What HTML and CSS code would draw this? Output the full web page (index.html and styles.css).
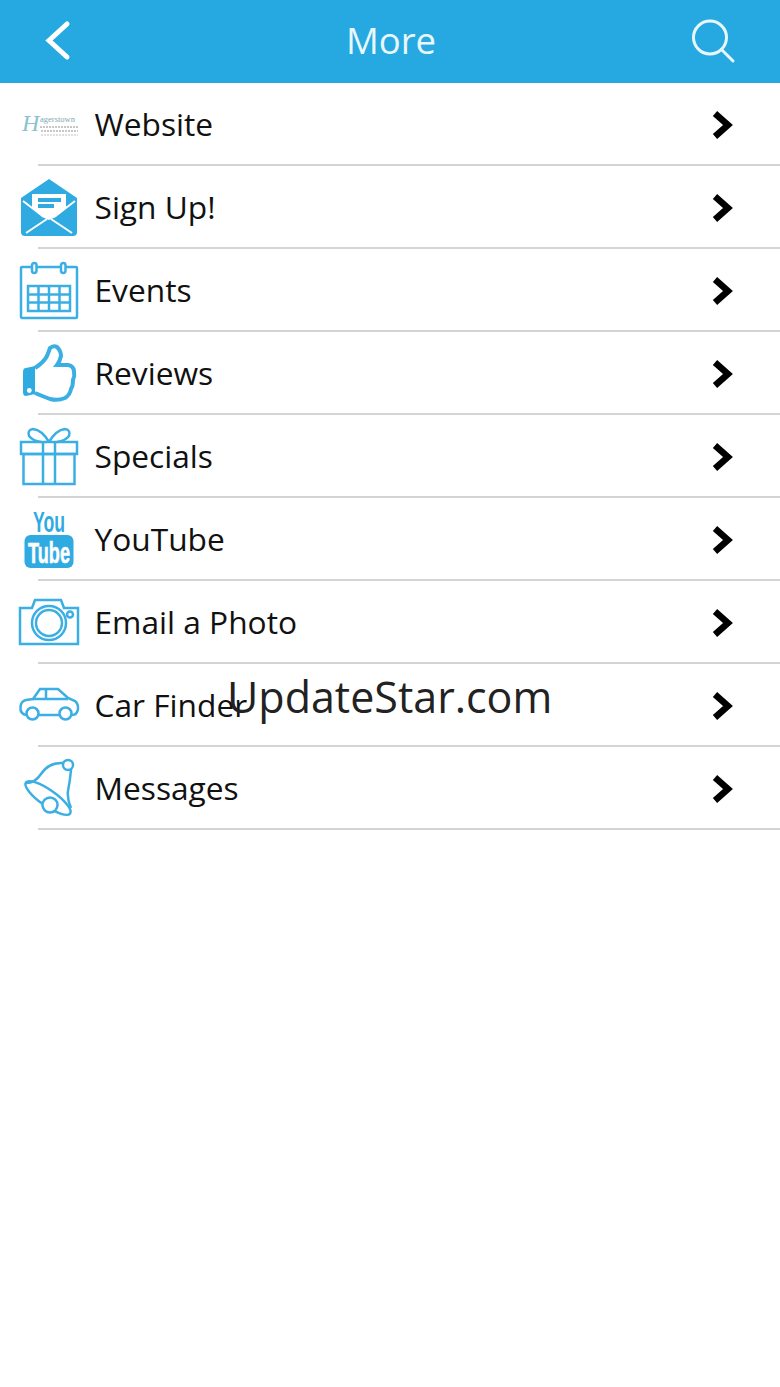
FILE: index.html
```html
<!DOCTYPE html>
<html lang="en">
<head>
  <meta charset="UTF-8">
  <meta name="viewport" content="width=device-width, initial-scale=1">
  <title>More</title>
  <link rel="stylesheet" href="styles.css">
</head>
<body>
<header class="topbar">
  <svg class="back-icon" width="30" height="44" viewBox="0 0 30 44"><polyline points="23,4 5,20.500 23,37"/></svg>
  <h1>More</h1>
  <svg class="search-icon" width="50" height="50" viewBox="0 0 50 50"><circle cx="22" cy="20.500" r="16.500"/><line x1="33.500" y1="32.500" x2="45" y2="44"/></svg>
</header>

<ul class="menu">
  <li class="menu-row">
    <svg class="icon" viewBox="-2 0 62 63">
      <text class="logo-h" x="2" y="38">H</text>
      <text class="logo-name" x="20" y="29">agerstown</text>
      <line class="logo-line" x1="20" y1="34" x2="58" y2="34"/>
      <line class="logo-line" x1="21" y1="38" x2="58" y2="38"/>
      <line class="logo-line faint" x1="21" y1="42" x2="58" y2="42"/>
    </svg>
    <span class="label">Website</span>
    <svg class="chevron" width="22" height="30" viewBox="0 0 22 30"><polyline points="3,3.500 16,15 3,26.500"/></svg>
  </li>
  <li class="menu-row">
    <svg class="icon" viewBox="-2 0 62 63">
      <path class="fill" d="M29 3 L57 22 V56 Q57 60 53 60 H5 Q1 60 1 56 V22 Z"/>
      <path class="paper" d="M12 18 H46 V32 L36 41 L29 44 L22 41 L12 32 Z"/>
      <rect class="fill" x="18" y="22" width="23" height="4"/>
      <rect class="fill" x="18" y="28" width="16" height="4"/>
      <path class="cut" d="M3 25 L20 38 M55 25 L38 38 M6 57 L27 43 M52 57 L31 43"/>
    </svg>
    <span class="label">Sign Up!</span>
    <svg class="chevron" width="22" height="30" viewBox="0 0 22 30"><polyline points="3,3.500 16,15 3,26.500"/></svg>
  </li>
  <li class="menu-row">
    <svg class="icon" viewBox="-2 0 62 63">
      <rect class="line" x="1" y="8" width="56" height="51" rx="1"/>
      <rect class="line ring" x="12" y="4" width="4.500" height="10" rx="2.200"/>
      <rect class="line ring" x="41" y="4" width="4.500" height="10" rx="2.200"/>
      <rect class="line" x="8" y="27" width="42" height="25"/>
      <path class="line" d="M18.500 27 V52 M29 27 V52 M39.500 27 V52 M8 35.500 H50 M8 43.500 H50"/>
    </svg>
    <span class="label">Events</span>
    <svg class="chevron" width="22" height="30" viewBox="0 0 22 30"><polyline points="3,3.500 16,15 3,26.500"/></svg>
  </li>
  <li class="menu-row">
    <svg class="icon" viewBox="-2 0 62 63">
      <path class="line thick" d="M15 26 Q24 20 27 14 Q29 9 30 6 Q34 3 37 5 Q41 9 41 14 Q40 19 37 23 H48 Q54 24 54 30 Q55 34 53 38 Q53 44 51 47 Q50 53 45 56 Q38 59 30 57 Q22 54 15 51"/>
      <path class="fill" d="M15 24 V52 L6 54 Q3 54 3 50 V30 Q3 26 6 26 Z"/>
      <circle class="paper" cx="9.300" cy="48.500" r="2.400"/>
    </svg>
    <span class="label">Reviews</span>
    <svg class="chevron" width="22" height="30" viewBox="0 0 22 30"><polyline points="3,3.500 16,15 3,26.500"/></svg>
  </li>
  <li class="menu-row">
    <svg class="icon" viewBox="-2 0 62 63">
      <rect class="line" x="1" y="17" width="56" height="12"/>
      <rect class="line" x="3.500" y="29" width="51" height="30"/>
      <path class="line" d="M23 17 V59 M35 17 V59"/>
      <path class="line" d="M29 17 Q22 5 13 4 Q7 5 9 11 Q13 16 21 17 M29 17 Q36 5 45 4 Q51 5 49 11 Q45 16 37 17"/>
    </svg>
    <span class="label">Specials</span>
    <svg class="chevron" width="22" height="30" viewBox="0 0 22 30"><polyline points="3,3.500 16,15 3,26.500"/></svg>
  </li>
  <li class="menu-row">
    <svg class="icon" viewBox="-2 0 62 63">
      <text class="yt-you" x="13" y="24" textLength="32" lengthAdjust="spacingAndGlyphs">You</text>
      <rect class="fill" x="4.500" y="27" width="49" height="33" rx="6"/>
      <text class="yt-tube" x="8" y="55" textLength="42" lengthAdjust="spacingAndGlyphs">Tube</text>
    </svg>
    <span class="label">YouTube</span>
    <svg class="chevron" width="22" height="30" viewBox="0 0 22 30"><polyline points="3,3.500 16,15 3,26.500"/></svg>
  </li>
  <li class="menu-row">
    <svg class="icon" viewBox="-2 0 62 63">
      <path class="line" d="M0 17 H12 L15 9 H41 L44 17 H58 V53 H0 Z"/>
      <circle class="line" cx="29" cy="32" r="17"/>
      <circle class="line" cx="29" cy="32" r="13"/>
      <circle class="line" cx="50" cy="23.500" r="3"/>
    </svg>
    <span class="label">Email a Photo</span>
    <svg class="chevron" width="22" height="30" viewBox="0 0 22 30"><polyline points="3,3.500 16,15 3,26.500"/></svg>
  </li>
  <li class="menu-row">
    <svg class="icon" viewBox="-2 0 62 63">
      <path class="line" d="M6 41 Q0 40 0.500 33 Q1 27 6 26 L13 25 L20 15 H38 L48 24 L55 27 Q58.500 30 58 35 Q57 41 52 41 M18.500 41 H39.500"/>
      <path class="line" d="M13 25 H48 M26 15 V25"/>
      <circle class="line" cx="12.500" cy="39.500" r="6"/>
      <circle class="line" cx="45.500" cy="39.500" r="6"/>
    </svg>
    <span class="label">Car Finder</span>
    <svg class="chevron" width="22" height="30" viewBox="0 0 22 30"><polyline points="3,3.500 16,15 3,26.500"/></svg>
  </li>
  <li class="menu-row">
    <svg class="icon" viewBox="-2 0 62 63">
      <ellipse class="line" cx="28" cy="41" rx="27" ry="8" transform="rotate(35 28 41)"/>
      <path class="line" d="M6 26 Q15 26 21 17 Q29 5 43 6 M51 13 Q50 24 48 34 Q47 42 51 51"/>
      <circle class="line bell-knob" cx="48" cy="8" r="5"/>
      <circle class="line bell-knob" cx="30" cy="48" r="7.500"/>
    </svg>
    <span class="label">Messages</span>
    <svg class="chevron" width="22" height="30" viewBox="0 0 22 30"><polyline points="3,3.500 16,15 3,26.500"/></svg>
  </li>
</ul>

<div class="watermark">UpdateStar.com</div>
</body>
</html>
```

FILE: styles.css
```css
* {
  box-sizing: border-box;
}

body {
  position: relative;
  min-height: 1387px;
  margin: 0;
  background: #ffffff;
  font-family: 'Open Sans', sans-serif;
  color: #111111;
}

.topbar {
  display: grid;
  grid-template-columns: 1fr auto 1fr;
  align-items: center;
  height: 83px;
  padding: 0 42px 0 44px;
  background: #25a9e0;
}

.topbar h1 {
  margin: 0 0 4px;
  font-size: 36.500px;
  font-weight: 400;
  color: #e9f6fc;
}

.back-icon polyline {
  fill: none;
  stroke: #ffffff;
  stroke-width: 5;
  stroke-linecap: round;
}

.search-icon {
  justify-self: end;
}

.search-icon circle,
.search-icon line {
  fill: none;
  stroke: #e9f6fc;
  stroke-width: 3;
  stroke-linecap: round;
}

.menu {
  margin: 0;
  padding: 0;
  list-style: none;
}

.menu-row {
  display: flex;
  align-items: center;
  position: relative;
  height: 83px;
  padding: 0 46px 0 18px;
}

.menu-row::after {
  content: '';
  position: absolute;
  left: 38px;
  right: 0;
  bottom: 0;
  height: 2px;
  background: #d4d4d4;
}

.icon {
  flex: none;
  width: 62px;
  height: 63px;
  margin-right: 14.500px;
}

.label {
  flex: 1;
  padding-bottom: 2px;
  font-size: 31.700px;
}

.chevron polyline {
  fill: none;
  stroke: #000000;
  stroke-width: 6.500;
}

.fill {
  fill: #2fabe2;
}

.paper {
  fill: #ffffff;
}

.cut {
  fill: none;
  stroke: #ffffff;
  stroke-width: 2;
}

.line {
  fill: none;
  stroke: #3bafe4;
  stroke-width: 2.500;
}

.ring {
  fill: #ffffff;
}

.thick {
  stroke-width: 4;
}

.bell-knob {
  fill: #ffffff;
}

.logo-h {
  font-family: 'Liberation Serif', serif;
  font-style: italic;
  font-size: 24px;
  fill: #8cc3cc;
}

.logo-name {
  font-family: 'Liberation Serif', serif;
  font-size: 8.500px;
  fill: #7fa9b3;
}

.logo-line {
  stroke: #b5b5b5;
  stroke-width: 1.500;
  stroke-dasharray: 2 1;
}

.faint {
  stroke: #d5d5d5;
}

.yt-you,
.yt-tube {
  font-family: 'Liberation Sans Narrow', 'Liberation Sans', sans-serif;
  font-weight: 700;
}

.yt-you {
  font-size: 29px;
  fill: #2fabe2;
}

.yt-tube {
  font-size: 30px;
  fill: #ffffff;
  stroke: #ffffff;
  stroke-width: 0.600;
}

.watermark {
  position: absolute;
  left: 227px;
  top: 667px;
  font-size: 43px;
  line-height: 60px;
  color: #222222;
}
```
